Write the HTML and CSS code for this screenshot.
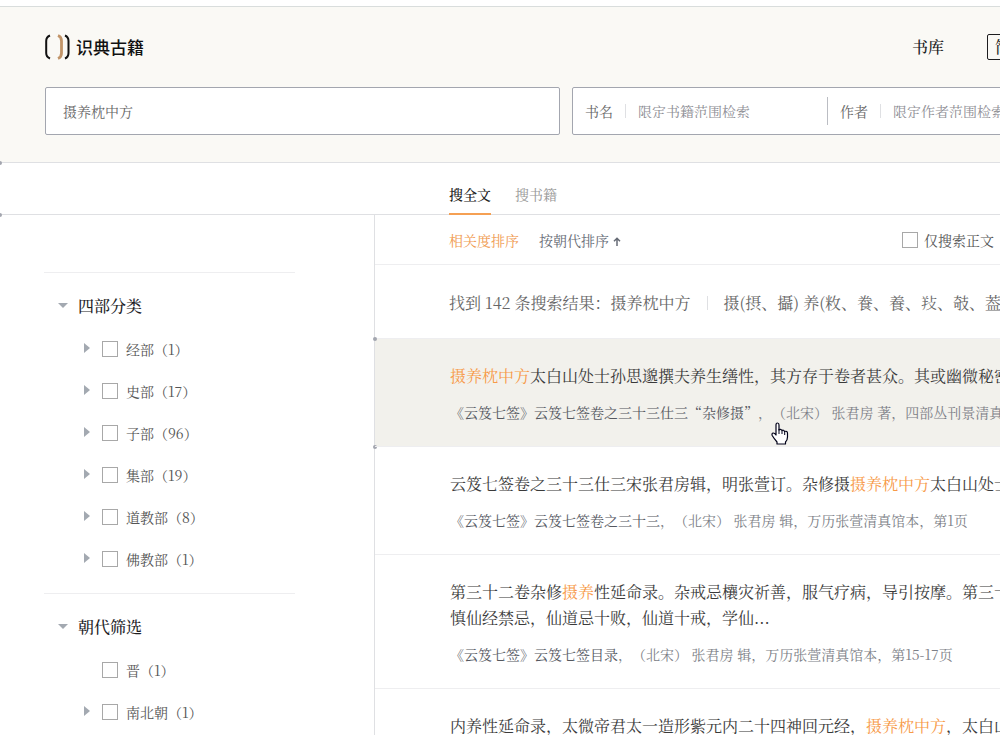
FILE: index.html
```
<!DOCTYPE html>
<html lang="zh-CN">
<head>
  <meta charset="UTF-8" />
  <meta name="viewport" content="width=device-width, initial-scale=1" />
  <title>识典古籍 | 摄养枕中方</title>
  <link rel="stylesheet" href="styles.css">
</head>
<body>
  <div class="page">
    <header class="header">
      <div class="header-top">
        <a class="logo" href="#">
          <svg width="26" height="26" viewBox="0 0 26 26" fill="none" stroke-width="2" aria-hidden="true">
            <path d="M5 1.500C2.500 2.500 1.200 4 1.200 7V19C1.200 22 2.500 23.500 5 24.500" stroke="#111" />
            <path d="M13 1.500C15.500 2.500 16.500 4 16.500 7V19C16.500 22 15.500 23.500 13 24.500" stroke="#c19468" stroke-width="2.800" />
            <path d="M20 1.500C22.500 2.500 23.500 4 23.500 7V19C23.500 22 22.500 23.500 20 24.500" stroke="#111" />
          </svg>
          <span>识典古籍</span>
        </a>
        <nav class="nav">
          <a href="#">书库</a>
          <button class="lang" type="button">简体</button>
        </nav>
      </div>
      <form class="search">
        <input class="keyword" type="text" aria-label="检索词" value="摄养枕中方" />
        <div class="scope">
          <div class="scope-item">
            <label for="book">书名</label>
            <input type="text" id="book" placeholder="限定书籍范围检索" />
          </div>
          <div class="scope-item">
            <label for="author">作者</label>
            <input type="text" id="author" placeholder="限定作者范围检索" />
          </div>
        </div>
      </form>
    </header>

    <nav class="tabs">
      <a class="tab active" href="#">搜全文</a>
      <a class="tab" href="#">搜书籍</a>
    </nav>

    <div class="content">
      <aside class="sidebar">
        <section class="filter">
          <h2><i class="caret down"></i>四部分类</h2>
          <ul>
            <li><i class="caret"></i><label><input type="checkbox" />经部（1）</label></li>
            <li><i class="caret"></i><label><input type="checkbox" />史部（17）</label></li>
            <li><i class="caret"></i><label><input type="checkbox" />子部（96）</label></li>
            <li><i class="caret"></i><label><input type="checkbox" />集部（19）</label></li>
            <li><i class="caret"></i><label><input type="checkbox" />道教部（8）</label></li>
            <li><i class="caret"></i><label><input type="checkbox" />佛教部（1）</label></li>
          </ul>
        </section>
        <section class="filter">
          <h2><i class="caret down"></i>朝代筛选</h2>
          <ul>
            <li><i class="caret none"></i><label><input type="checkbox" />晋（1）</label></li>
            <li><i class="caret"></i><label><input type="checkbox" />南北朝（1）</label></li>
          </ul>
        </section>
      </aside>

      <main class="results">
        <div class="sort">
          <button class="sort-btn active" type="button">相关度排序</button>
          <button class="sort-btn" type="button">按朝代排序
            <svg width="8" height="9" viewBox="0 0 8 9" fill="none" stroke="#666b75" stroke-width="1.500" aria-hidden="true">
              <path d="M4 9V1.500M1 4.200L4 1.200L7 4.200" />
            </svg>
          </button>
          <label class="only-text"><input type="checkbox" />仅搜索正文</label>
        </div>
        <div class="summary">
          <span>找到 142 条搜索结果：摄养枕中方</span>
          <span class="variants">摄(摂、攝) 养(敉、飬、養、𢼝、攲、葢)</span>
        </div>

        <article class="result hover">
          <h3><em>摄养枕中方</em>太白山处士孙思邈撰夫养生缮性，其方存于卷者甚众。其或幽微秘密</h3>
          <p><a href="#">《云笈七签》云笈七签卷之三十三仕三“杂修摄”</a>，（北宋） 张君房 著，四部丛刊景清真馆本</p>
          <svg class="cursor" width="18" height="23" viewBox="0 0 18 23" aria-hidden="true">
            <path d="M5 13V3Q5 1 6.500 1Q8 1 8 3V8Q9.500 6.500 11 8.500Q12.500 7.500 13.500 9.500Q16.500 8.500 16.500 11.500V15Q16.500 18 14.500 20V22H6V20Q3 16.500 1.200 13.500Q0.500 11.500 2 11Q3.500 10.800 5 13Z" fill="#fff" stroke="#000018" stroke-width="1.200" stroke-linejoin="round" />
            <path d="M8 7V12M11 8.500V12M13.700 9.500V13" stroke="#000018" fill="none" />
          </svg>
        </article>
        <article class="result">
          <h3>云笈七签卷之三十三仕三宋张君房辑，明张萱订。杂修摄<em>摄养枕中方</em>太白山处士</h3>
          <p><a href="#">《云笈七签》云笈七签卷之三十三</a>，（北宋） 张君房 辑，万历张萱清真馆本，第1页</p>
        </article>
        <article class="result">
          <h3>第三十二卷杂修<em>摄养</em>性延命录。杂戒忌欀灾祈善，服气疗病，导引按摩。第三十<br>慎仙经禁忌，仙道忌十败，仙道十戒，学仙...</h3>
          <p><a href="#">《云笈七签》云笈七签目录</a>，（北宋） 张君房 辑，万历张萱清真馆本，第15-17页</p>
        </article>
        <article class="result">
          <h3>内养性延命录，太微帝君太一造形紫元内二十四神回元经，<em>摄养枕中方</em>，太白山</h3>
        </article>
      </main>
    </div>
  </div>
</body>
</html>
```

FILE: styles.css
```
* {
  box-sizing: border-box;
}
body {
  margin: 0;
  background: #fff;
  color: #333;
  font-family: "Noto Serif CJK SC", "Noto Sans CJK SC", serif;
  font-size: 14px;
  line-height: 22px;
  text-spacing-trim: space-all;
}
a {
  color: inherit;
  text-decoration: none;
}
button,
input {
  font: inherit;
  color: inherit;
}
h2,
h3,
p,
ul {
  margin: 0;
  padding: 0;
  font-weight: 400;
}
li {
  list-style: none;
}
em {
  color: #f79a48;
  font-style: normal;
}
.page {
  padding-top: 6px;
  overflow: hidden;
}

/* header */
.header {
  padding: 26px 0 27px 45px;
  background: #faf9f5;
  border-top: 1px solid #d9dddc;
  border-bottom: 1px solid #dfe0e3;
}
.header-top {
  display: flex;
  justify-content: space-between;
  align-items: center;
  height: 28px;
  margin-bottom: 26px;
}
.logo {
  display: flex;
  align-items: center;
  gap: 5px;
  height: 26px;
  color: #111;
  font-family: "Noto Sans CJK SC", sans-serif;
  font-size: 17px;
  font-weight: 500;
}
.nav {
  display: flex;
  align-items: center;
  gap: 43px;
  margin-right: -35px;
  color: #1d1d1f;
  font-size: 16px;
  font-weight: 500;
}
.lang {
  height: 26px;
  padding: 0 7px;
  background: none;
  border: 1px solid #1d1d1f;
  border-radius: 2px;
  line-height: 22px;
}
.search {
  display: flex;
  gap: 12px;
}
.keyword,
.scope {
  height: 48px;
  background: #fff;
  border: 1px solid #a3a6af;
  border-radius: 2px;
}
.keyword {
  flex: 0 0 515px;
  padding: 0 17px;
  color: #666;
}
.scope {
  display: flex;
  flex: 1 0 auto;
  align-items: center;
}
.scope-item {
  display: flex;
  align-items: center;
  width: 254px;
  padding-left: 12px;
  color: #666;
}
.scope-item + .scope-item {
  height: 28px;
  border-left: 1px solid #bbbdc3;
}
.scope-item label {
  flex: none;
  padding-right: 12px;
}
.scope-item input {
  width: 100%;
  height: 14px;
  padding: 0 0 0 12px;
  border: 0;
  border-left: 1px solid #dfe0e3;
  background: none;
}
.scope-item input::placeholder {
  color: #8f8f96;
}

/* tabs */
.tabs {
  display: flex;
  gap: 24px;
  height: 52px;
  padding-left: 449px;
  border-bottom: 1px solid #dfe0e3;
}
.tab {
  height: 52px;
  padding-top: 20px;
  color: #999;
}
.tab.active {
  color: #222;
  font-weight: 500;
  border-bottom: 2px solid #f5a053;
}

/* sidebar */
.content {
  display: flex;
}
.sidebar {
  flex: 0 0 374px;
  padding: 57px 79px 0 44px;
}
.filter {
  padding: 22px 0 13px 14px;
  border-top: 1px solid #eeeef0;
}
.filter h2 {
  display: flex;
  align-items: center;
  gap: 10px;
  color: #1d1d1f;
  font-size: 16px;
  font-weight: 500;
  margin-bottom: 11px;
}
.filter li {
  display: flex;
  align-items: center;
  gap: 12px;
  height: 42px;
  padding-left: 26px;
}
.caret {
  width: 6px;
  margin-bottom: 2px;
  border: 5px solid transparent;
  border-left: 6px solid #a3a9b1;
  border-right: 0;
}
.caret.down {
  width: 10px;
  border: 5px solid transparent;
  border-top-color: #a3a9b1;
  border-bottom: 0;
}
.caret.none {
  visibility: hidden;
}
label {
  display: flex;
  align-items: center;
}
input[type="checkbox"] {
  appearance: none;
  width: 16px;
  height: 16px;
  margin: 0 8px 0 0;
  background: #fff;
  border: 1px solid #a8a8a8;
}
.filter label {
  color: #555;
}

/* results */
.results {
  flex: 1;
  min-width: 0;
  border-left: 1px solid #dfe0e3;
  white-space: nowrap;
}
.sort {
  display: flex;
  align-items: center;
  gap: 20px;
  height: 50px;
  padding: 0 6px 0 74px;
  border-bottom: 1px solid #eeeef0;
}
.sort-btn {
  padding: 0;
  background: none;
  border: 0;
  color: #666b75;
}
.sort-btn.active {
  color: #f09a50;
}
.only-text {
  margin-left: auto;
  color: #555;
}
.only-text input[type="checkbox"] {
  margin-right: 6px;
}
.summary {
  display: flex;
  align-items: center;
  gap: 16px;
  height: 73px;
  padding: 2px 0 0 74px;
  color: #666;
  font-size: 16px;
}
.variants {
  padding-left: 16px;
  border-left: 1px solid #dfe0e3;
  line-height: 14px;
}
.result {
  position: relative;
  padding: 24px 0 22px 75px;
  border-top: 1px solid #eeeef0;
}
.result h3 {
  color: #3a3a3a;
  font-size: 16px;
  line-height: 26px;
  margin-bottom: 12px;
}
.result p {
  color: #7d7f87;
  line-height: 23px;
}
.result p a {
  color: #55585f;
}
.result.hover {
  background: #f2f1ec;
}
.cursor {
  position: absolute;
  top: 83px;
  left: 396px;
}

/* joints on the divider lines */
.header,
.tabs {
  position: relative;
}
.header::after,
.tabs::after,
.result.hover::before,
.result.hover::after {
  content: "";
  position: absolute;
  left: -2px;
  bottom: -3px;
  width: 4px;
  height: 4px;
  background: #a3a6af;
  border-radius: 50%;
}
.result.hover::before {
  top: -2px;
}
```
